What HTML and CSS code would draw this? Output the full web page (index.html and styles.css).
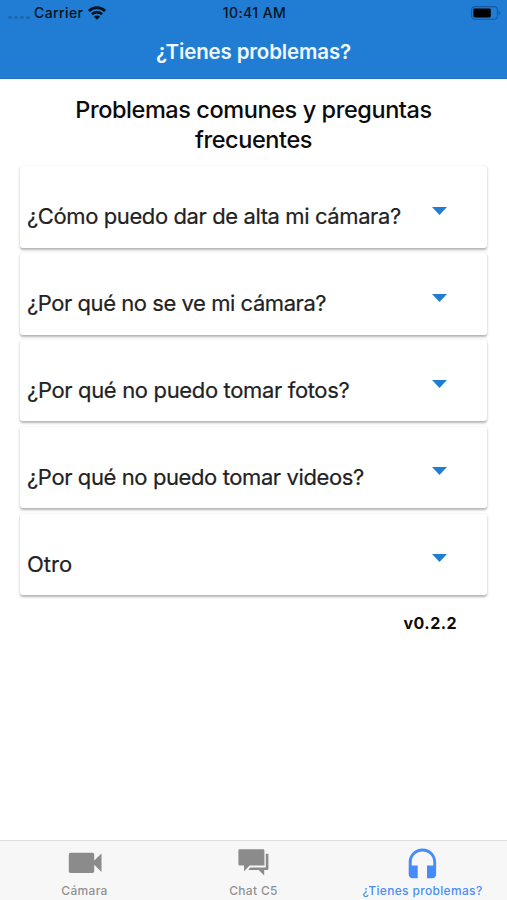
FILE: index.html
```html
<!DOCTYPE html>
<html lang="es">
<head>
<meta charset="utf-8">
<title>¿Tienes problemas?</title>
<link rel="stylesheet" href="styles.css">
</head>
<body>
<div class="app">
  <header class="header">
    <div class="status">
      <div class="carrier">
        <span class="dots"><i></i><i></i><i></i><i></i></span>
        <span class="carrier-name">Carrier</span>
        <svg class="wifi" viewBox="0 0 18 14" width="18" height="14" fill="none" stroke="#05121f" stroke-width="2.7"><path d="M.9 5a11.5 11.5 0 0 1 16.200 0M3.900 8.300a7.200 7.200 0 0 1 10.200 0"/><path d="M9 13.700 5.900 10.700a4.400 4.400 0 0 1 6.200 0Z" fill="#05121f" stroke="none"/></svg>
      </div>
      <span class="time">10:41 AM</span>
      <svg class="battery" viewBox="0 0 30 14" width="30" height="14"><rect x=".6" y=".6" width="25.8" height="12.6" rx="3.2" fill="none" stroke="#155a9e" stroke-width="1.1"/><rect x="2.4" y="2.4" width="17.4" height="9" rx="1.4" fill="#000"/><path d="M27.7 4.700q1.700.5 1.700 2.200t-1.700 2.200z" fill="#155a9e"/></svg>
    </div>
    <h1 class="title">¿Tienes problemas?</h1>
  </header>
  <main class="main">
    <h2 class="heading">Problemas comunes y preguntas<br>frecuentes</h2>
    <div class="cards">
      <div class="card"><span>¿Cómo puedo dar de alta mi cámara?</span><svg class="caret" viewBox="0 0 15 8"><path d="M0 0h15L7.500 8z"/></svg></div>
      <div class="card"><span class="tight">¿Por qué no se ve mi cámara?</span><svg class="caret" viewBox="0 0 15 8"><path d="M0 0h15L7.500 8z"/></svg></div>
      <div class="card"><span class="loose">¿Por qué no puedo tomar fotos?</span><svg class="caret" viewBox="0 0 15 8"><path d="M0 0h15L7.500 8z"/></svg></div>
      <div class="card"><span>¿Por qué no puedo tomar videos?</span><svg class="caret" viewBox="0 0 15 8"><path d="M0 0h15L7.500 8z"/></svg></div>
      <div class="card"><span class="short">Otro</span><svg class="caret" viewBox="0 0 15 8"><path d="M0 0h15L7.500 8z"/></svg></div>
    </div>
    <p class="version">v0.2.2</p>
  </main>
  <nav class="tabs">
    <div class="tab">
      <svg viewBox="0 0 34 32" width="34" height="32"><path d="M2.500 5.800h22q1.700 0 1.700 1.700v6l7.300-7v18.400l-7.300-7.200v6.500q0 1.700-1.700 1.700h-22Q.8 25.900.8 24.200V7.500q0-1.700 1.700-1.700z"/></svg>
      <span>Cámara</span>
    </div>
    <div class="tab">
      <svg viewBox="0 0 34 32" width="34" height="32"><path d="M2.600 2.200h23.600q1.200 0 1.200 1.200v15.100H12.700L7 24.200v-5.700H2.600q-1.200 0-1.200-1.200V3.400q0-1.200 1.200-1.200z"/><path d="M28.800 6.800h2.600v15q0 1.200-1.200 1.200h-3v5.400L21.700 23h-10v-1l1.700-1.500h15.400z"/></svg>
      <span>Chat C5</span>
    </div>
    <div class="tab active">
      <svg viewBox="0 0 34 32" width="34" height="32"><path d="M16.500 1.400C8.900 1.400 2.700 7.300 2.700 14.900v12.200q0 4.200 4.200 4.200h4.800V18.600H5.700v-3.700C5.700 8.700 10.500 4.400 16.500 4.400s10.800 4.300 10.800 10.500v3.700H21v12.700h4.900q4.200 0 4.200-4.200V14.900C30.100 7.300 24.100 1.400 16.500 1.400z"/></svg>
      <span>¿Tienes problemas?</span>
    </div>
  </nav>
</div>
</body>
</html>
```
FILE: styles.css
```css
* { box-sizing: border-box; }
body { margin: 0; background: #fff; font-family: Inter, "Liberation Sans", sans-serif; color: #0b0b0b; }
.app { display: flex; flex-direction: column; height: 900px; width: 507px; overflow: hidden; }
.header { height: 79px; background: #207dd3; border-bottom: 1px solid #2274bf; }
.status { display: grid; grid-template-columns: 1fr auto 1fr; align-items: center; height: 26px; padding: 0 6px 0 8px; color: #05121f; font-size: 14px; font-weight: 500; line-height: 26px; letter-spacing: .4px; }
.carrier { display: flex; align-items: center; }
.dots { display: flex; gap: 2px; width: 26px; padding-top: 8px; }
.dots i { width: 4px; height: 3px; border-radius: 2px; background: #1d69ae; }
.wifi { margin-left: 5px; }
.battery { justify-self: end; }
.title { margin: 12px 0 0; text-align: center; font-size: 20.5px; line-height: 28px; font-weight: 600; letter-spacing: -.15px; color: #eff8ff; }
.main { flex: 1; padding: 16px 20px 0 20px; }
.heading { margin: 0; text-align: center; font-size: 23.5px; line-height: 29.500px; font-weight: 500; letter-spacing: -.42px; }
.cards { display: grid; gap: 5.400px; margin-top: 12.400px; }
.card { display: flex; justify-content: space-between; height: 81.400px; padding: 35px 40px 0 7px; border-radius: 3px; background: #fff; box-shadow: 0 1.500px 2.500px rgba(0,0,0,.3); color: #222; font-size: 22px; line-height: 30px; letter-spacing: -.4px; white-space: nowrap; -webkit-text-stroke: .2px #222; }
.tight { letter-spacing: -.45px; }
.loose { letter-spacing: -.35px; }
.short { letter-spacing: 0; }
.caret { width: 15px; height: 8px; margin-top: 5.500px; fill: #207dd3; stroke: none; }
.version { margin: 14.600px 30px 0 0; text-align: right; font-size: 16px; line-height: 26px; font-weight: 700; letter-spacing: .45px; }
.tabs { display: grid; grid-template-columns: repeat(3, 1fr); height: 60px; border-top: 1px solid #dedede; background: #f7f7f7; }
.tab { display: flex; flex-direction: column; align-items: center; padding-top: 6px; color: #929292; font-size: 12px; line-height: 16px; font-weight: 500; letter-spacing: .33px; }
.tab svg { fill: #8b8b8b; }
.tab span { margin-top: 4px; }
.active { color: #4b8df8; }
.active svg { fill: #468bfa; }
```
